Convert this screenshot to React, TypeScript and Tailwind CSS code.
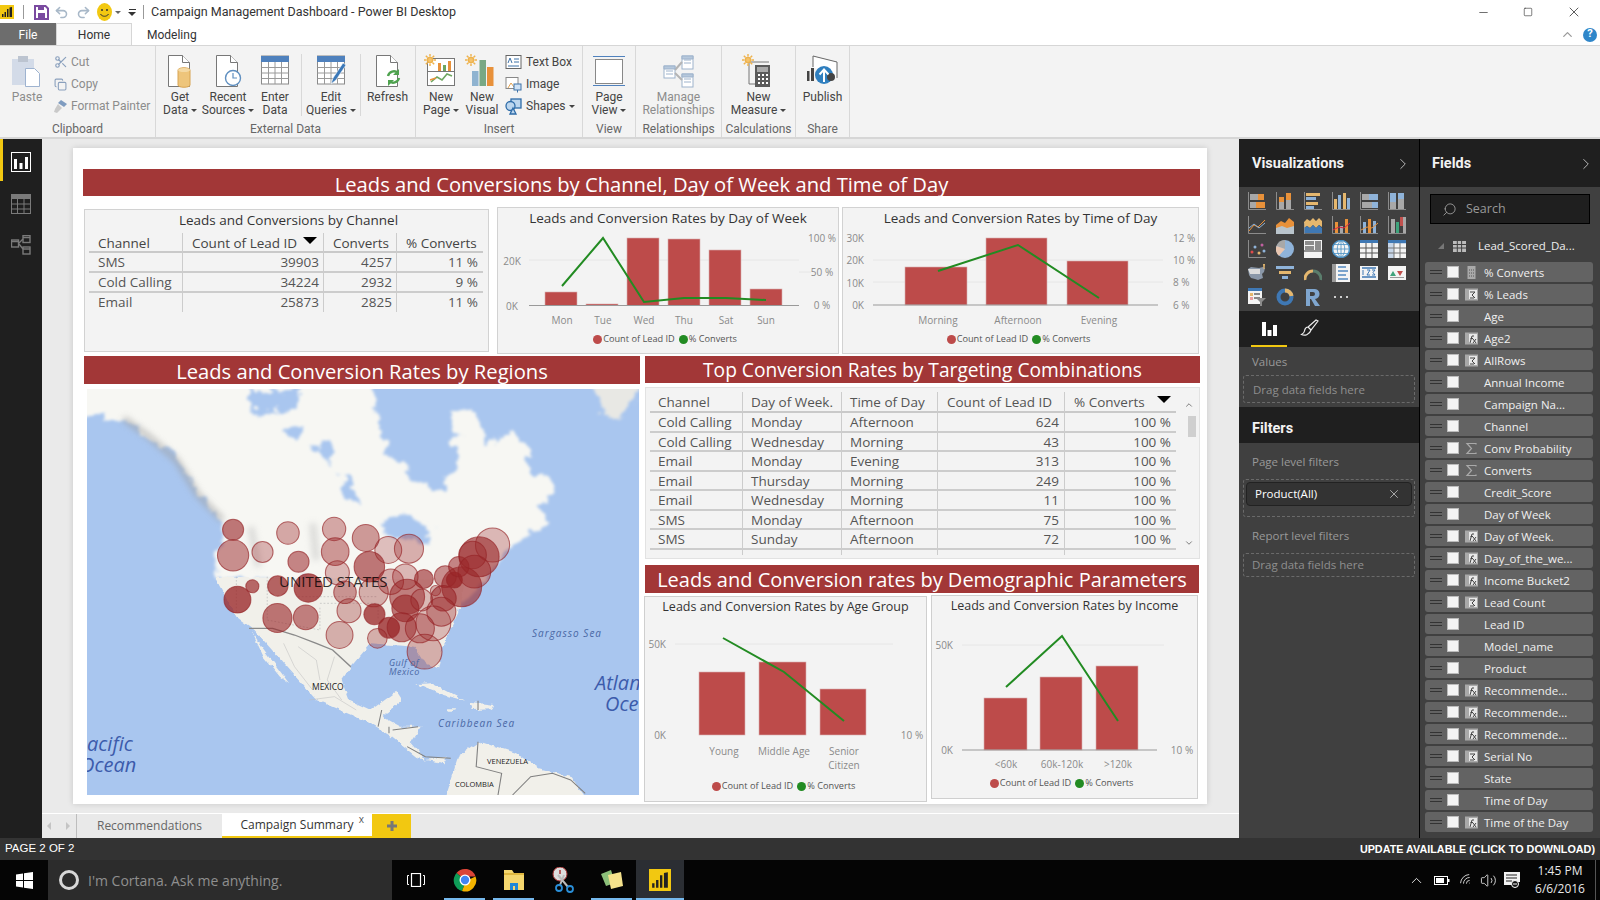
import { ReactNode } from "react";
import { ChevronRight, ChevronUp, Copy, Minus, Redo2, Scissors, Search, Square, Undo2, Volume2, Wifi, X } from "lucide-react";

const BAR = "#bd4b4a";
const LINE = "#228b22";
const YELLOW = "#f2c811";

const Caret = ({ color = "#444" }: { color?: string }) => (
  <span
    className="ml-[3px] inline-block h-0 w-0 border-x-[3px] border-t-[3px] border-x-transparent align-middle"
    style={{ borderTopColor: color }}
  />
);

/* ---------- ribbon icons ---------- */
const Doc = ({ children }: { children?: ReactNode }) => (
  <svg width="34" height="34" viewBox="0 0 34 34">
    <path d="M5.5 1.5h14l7 7v24h-21z" fill="#fff" stroke="#777" />
    <path d="M19.5 1.5v7h7" fill="#fff" stroke="#777" />
    {children}
  </svg>
);
const Sun = () => (
  <g stroke="#eeb24c" strokeWidth="1.4">
    <circle cx="6" cy="6" r="2.6" fill="#f5c36c" />
    <path d="M6 0v2.5M6 9.5V12M0 6h2.5M9.5 6H12M1.8 1.8l1.8 1.8M8.4 8.4l1.8 1.8M1.8 10.2l1.8-1.8M8.4 3.6l1.8-1.8" />
  </g>
);
const GridSheet = ({ pencil }: { pencil?: boolean }) => (
  <svg width="34" height="34" viewBox="0 0 34 34">
    <rect x="3.5" y="2" width="27" height="28" fill="#fff" stroke="#8a8a8a" />
    <rect x="3" y="2" width="28" height="6" fill="#4f81bd" />
    <path d="M3.5 13.5h27M3.5 19h27M3.5 24.5h27M10.5 8v22M17 8v22M23.5 8v22" stroke="#9a9a9a" fill="none" />
    {pencil && <path d="M17 30l2-6L29 9l3 2-10 15z" fill="#3b78b8" stroke="#fff" strokeWidth="0.6" />}
  </svg>
);
const PasteIcon = () => (
  <svg width="34" height="34" viewBox="0 0 34 34">
    <rect x="2" y="5" width="22" height="26" fill="#d3dbe8" />
    <rect x="8" y="2" width="10" height="6" fill="#bcc4d0" />
    <path d="M15.5 14.5h9l5 5v13h-14z" fill="#fff" stroke="#9eb3d0" />
  </svg>
);
const ManageIcon = () => (
  <svg width="34" height="34" viewBox="0 0 34 34" stroke="#9eb3cc" fill="#fff">
    <rect x="20" y="2" width="11" height="13" />
    <rect x="2" y="12" width="11" height="12" />
    <rect x="20" y="20" width="11" height="13" />
    <path d="M20 8l-7 8M13 19l7 7" fill="none" stroke="#b4b4b4" strokeWidth="2" />
    <path d="M4 17h7M4 20h7M22 6h7M22 9h7M22 25h7M22 28h7" strokeWidth="1" />
    <path d="M20 2h11v3H20zM2 12h11v3H2zM20 20h11v3H20z" fill="#b6c8dc" />
  </svg>
);

const RibbonBtn = ({ w, icon, label, label2, caret, dim }: { w: number; icon: ReactNode; label: string; label2?: string; caret?: boolean; dim?: boolean }) => (
  <div className="flex shrink-0 flex-col items-center" style={{ width: w }}>
    <div className="flex h-[37px] items-start justify-center">{icon}</div>
    <div className={`text-center text-[12px] leading-[13px] ${dim ? "text-[#8c8c8c]" : "text-[#444]"}`}>
      <div className="whitespace-nowrap">{label}{caret && !label2 && <Caret />}</div>
      {label2 && <div className="whitespace-nowrap">{label2}{caret && <Caret />}</div>}
    </div>
  </div>
);

const SmallBtn = ({ icon, label, dim, caret, gap = 5 }: { icon: ReactNode; label: string; dim?: boolean; caret?: boolean; gap?: number }) => (
  <div className={`flex h-[22px] items-center whitespace-nowrap text-[12px] ${dim ? "text-[#8c8c8c]" : "text-[#444]"}`}>
    <span className="flex w-[17px] justify-center" style={{ marginRight: gap }}>{icon}</span>
    {label}
    {caret && <Caret />}
  </div>
);

const RibbonGroup = ({ w, label, children }: { w: number; label: string; children: ReactNode }) => (
  <div className="flex h-full shrink-0 flex-col border-r border-[#d8d8d8]" style={{ width: w }}>
    <div className="flex h-[76px] pt-[8px]">{children}</div>
    <div className="text-center text-[12px] leading-[14px] text-[#666]">{label}</div>
  </div>
);

const Ribbon = () => (
  <div className="flex h-[93px] border-b-2 border-[#d6d6d6] bg-[#f3f3f3] font-['Roboto',sans-serif]">
    <RibbonGroup w={156} label="Clipboard">
      <div className="ml-[2px]"><RibbonBtn w={50} icon={<PasteIcon />} label="Paste" dim /></div>
      <div className="-mt-[3px]">
        <SmallBtn dim label="Cut" icon={<Scissors size={14} color="#8aa0bd" />} gap={2} />
        <SmallBtn dim label="Copy" icon={<Copy size={13} color="#8aa0bd" />} gap={2} />
        <SmallBtn dim label="Format Painter" gap={2} icon={
          <svg width="15" height="15" viewBox="0 0 15 15"><path d="M8 1l6 4-3 3-6-4z" fill="#7f9cc0" /><path d="M5 5l4 4-5 5-3-1 1-3z" fill="#c9c9c9" /></svg>
        } />
      </div>
    </RibbonGroup>
    <RibbonGroup w={260} label="External Data">
      <RibbonBtn w={48} label="Get" label2="Data" caret icon={<Doc><path d="M15 16c0-3 12-3 12 0v15c0 3-12 3-12 0z" fill="#eec57b" stroke="#d8a452" /><ellipse cx="21" cy="16" rx="6" ry="2" fill="#f4d9a4" /></Doc>} />
      <RibbonBtn w={48} label="Recent" label2="Sources" caret icon={<Doc><circle cx="22" cy="24" r="7.5" fill="#fff" stroke="#5f8fc0" strokeWidth="1.4" /><path d="M22 19v5h4" fill="none" stroke="#5f8fc0" strokeWidth="1.2" /></Doc>} />
      <RibbonBtn w={46} label="Enter" label2="Data" icon={<GridSheet />} />
      <div className="ml-[3px] h-[62px] w-px bg-[#d8d8d8]" />
      <RibbonBtn w={58} label="Edit" label2="Queries" caret icon={<GridSheet pencil />} />
      <div className="h-[62px] w-px bg-[#d8d8d8]" />
      <RibbonBtn w={53} label="Refresh" icon={<Doc><path d="M17 22a6 6 0 0 1 10-3M28 24a6 6 0 0 1-10 3" fill="none" stroke="#4ea24e" strokeWidth="2.4" /><path d="M28 15v6h-6zM17 32v-6h6z" fill="#4ea24e" /></Doc>} />
    </RibbonGroup>
    <RibbonGroup w={167} label="Insert">
      <RibbonBtn w={50} label="New" label2="Page" caret icon={
        <svg width="34" height="34" viewBox="0 0 34 34">
          <rect x="3.5" y="4.5" width="27" height="27" fill="#fff" stroke="#777" />
          <path d="M3.5 17.5h27" stroke="#777" />
          <rect x="14" y="9" width="3" height="8" fill="#e8913a" /><rect x="19" y="11" width="3" height="6" fill="#6ea660" /><rect x="24" y="7" width="3" height="10" fill="#e8913a" />
          <path d="M7 28l6-5 5 3 5-6 5 2" fill="none" stroke="#6ea660" strokeWidth="1.6" /><path d="M6 26l6-2" stroke="#e8913a" strokeWidth="1.6" />
          <Sun />
        </svg>} />
      <RibbonBtn w={32} label="New" label2="Visual" icon={
        <svg width="34" height="34" viewBox="0 0 34 34"><rect x="7" y="17" width="6.5" height="15" fill="#8fb3d0" /><rect x="14.5" y="6" width="6.5" height="26" fill="#79a884" /><rect x="22" y="13" width="6.5" height="19" fill="#e8913a" /><Sun /></svg>} />
      <div className="-mt-[3px] ml-[7px]">
        <SmallBtn label="Text Box" gap={4} icon={<svg width="17" height="16" viewBox="0 0 17 16"><rect x="1" y="1.5" width="15" height="13" fill="#fff" stroke="#666" /><path d="M3 9l2-5 2 5M9 5h5M9 8h5M3 12h11" stroke="#3f73a8" fill="none" /></svg>} />
        <SmallBtn label="Image" gap={4} icon={<svg width="17" height="17" viewBox="0 0 17 17"><rect x="1" y="1.5" width="12" height="11" fill="#fff" stroke="#888" /><path d="M3 12l3-5 3 4 2-2" stroke="#e0a050" fill="none" /><rect x="9" y="8" width="7" height="6" fill="#cfe2f5" stroke="#3f73a8" /><path d="M12.5 14v2.5" stroke="#3f73a8" /></svg>} />
        <SmallBtn label="Shapes" caret gap={4} icon={<svg width="17" height="17" viewBox="0 0 17 17" fill="#bcd6ee" stroke="#2f6ca8" strokeWidth="1.3"><rect x="6" y="1" width="10" height="9" /><circle cx="5.5" cy="8" r="4.5" /><path d="M5 16l3-6 3 6z" /></svg>} />
      </div>
    </RibbonGroup>
    <RibbonGroup w={53} label="View">
      <RibbonBtn w={52} label="Page" label2="View" caret icon={
        <svg width="34" height="34" viewBox="0 0 34 34"><rect x="3.5" y="5.5" width="27" height="24" fill="#fff" stroke="#888" /><path d="M1 2.5h32M1 31.5h32" stroke="#4f81bd" /></svg>} />
    </RibbonGroup>
    <RibbonGroup w={86} label="Relationships">
      <RibbonBtn w={85} label="Manage" label2="Relationships" dim icon={<ManageIcon />} />
    </RibbonGroup>
    <RibbonGroup w={74} label="Calculations">
      <RibbonBtn w={73} label="New" label2="Measure" caret icon={
        <svg width="34" height="34" viewBox="0 0 34 34">
          <path d="M7 8v22h7" fill="none" stroke="#777" /><path d="M7 8h20" stroke="#777" />
          <rect x="13" y="11" width="15" height="22" fill="#5a5a5a" /><rect x="15" y="13" width="11" height="5" fill="#a9a9a9" />
          <path d="M16 21h2M20 21h2M24 21h2M16 25h2M20 25h2M24 25h2M16 29h2M20 29h2M24 29h2" stroke="#fff" strokeWidth="1.8" />
          <Sun />
        </svg>} />
    </RibbonGroup>
    <RibbonGroup w={54} label="Share">
      <RibbonBtn w={53} label="Publish" icon={
        <svg width="34" height="34" viewBox="0 0 34 34">
          <path d="M7 13V2l24 6v16" fill="#fff" stroke="#666" />
          <rect x="1" y="17" width="2.5" height="10" fill="#444" /><rect x="5" y="14" width="3" height="13" fill="#444" />
          <circle cx="18" cy="21" r="9" fill="#2f7fbf" /><circle cx="25" cy="23" r="4" fill="#444" />
          <path d="M18 28v-12M13.5 20.5l4.5-5 4.5 5" fill="none" stroke="#fff" strokeWidth="2" />
        </svg>} />
    </RibbonGroup>
  </div>
);

/* ---------- title bar ---------- */
const PbiLogo = ({ size = 14 }: { size?: number }) => (
  <svg width={size} height={size} viewBox="0 0 14 14">
    <rect width="14" height="14" fill={YELLOW} />
    <path d="M2 12V9h1.5v3zM4.5 12V7H6v5zM7 12V4h1.5v8zM9.5 12V2.5L12 2v10z" fill="#222" />
  </svg>
);

const TitleBar = () => (
  <div className="flex h-[23px] items-center bg-white pt-[1px]">
    <PbiLogo />
    <div className="ml-[9px] h-[14px] w-px bg-[#999]" />
    <svg className="ml-[10px]" width="15" height="15" viewBox="0 0 15 15"><path d="M1 1h10.5L14 3.5V14H1z" fill="none" stroke="#7a4aa0" strokeWidth="2" /><rect x="4" y="1" width="6" height="4" fill="#7a4aa0" /><rect x="4" y="8" width="7" height="5" fill="#7a4aa0" /></svg>
    <Undo2 className="ml-[5px]" size={15} color="#a8b8c8" strokeWidth={2.5} />
    <Redo2 className="ml-[7px]" size={15} color="#a8b8c8" strokeWidth={2.5} />
    <svg className="ml-[6px]" width="15" height="18" viewBox="0 0 15 18"><ellipse cx="7.5" cy="9" rx="7.5" ry="9" fill={YELLOW} /><circle cx="5" cy="7" r="1" fill="#333" /><circle cx="10" cy="7" r="1" fill="#333" /><path d="M3.5 11c1.5 3 6.5 3 8 0" fill="none" stroke="#333" /></svg>
    <Caret color="#666" />
    <span className="ml-[7px] flex flex-col items-center gap-[2px]"><span className="h-px w-[7px] bg-[#333]" /><span className="h-0 w-0 border-x-[4px] border-t-[4px] border-x-transparent border-t-[#333]" /></span>
    <div className="ml-[7px] h-[14px] w-px bg-[#999]" />
    <span className="ml-[7px] font-['Roboto',sans-serif] text-[12.5px] text-[#333]">Campaign Management Dashboard - Power BI Desktop</span>
    <div className="ml-auto flex items-center text-[#333]">
      <Minus size={13} strokeWidth={1.3} />
      <Square className="ml-[33px]" size={10} strokeWidth={1.5} />
      <X className="ml-[33px] mr-[18px]" size={16} strokeWidth={1.2} />
    </div>
  </div>
);

const TabRow = () => (
  <div className="flex h-[23px] items-stretch border-b border-[#d6d6d6] bg-white pt-px font-['Roboto',sans-serif] text-[12px]">
    <div className="-mt-px flex w-[56px] items-center justify-center bg-[#6d6d6d] pt-px text-white">File</div>
    <div className="-mt-px flex w-[76px] items-center justify-center border-x border-t border-[#d6d6d6] bg-[#f8f8f8] pt-px text-[#333]">Home</div>
    <div className="flex items-center pl-[15px] text-[#333]">Modeling</div>
    <div className="ml-auto flex items-center">
      <ChevronUp size={15} color="#999" />
      <span className="ml-[8px] mr-[3px] flex h-[14px] w-[14px] items-center justify-center rounded-full bg-[#2f86c9] text-[11px] font-bold text-white">?</span>
    </div>
  </div>
);

/* ---------- report visuals ---------- */
const Banner = ({ text, size, className }: { text: string; size: number; className: string }) => (
  <div className={`flex items-center justify-center whitespace-nowrap bg-[#a23737] text-white ${className}`} style={{ fontSize: size }}>{text}</div>
);

const Legend = ({ className }: { className: string }) => (
  <div className={`flex items-center justify-center whitespace-nowrap text-[9.2px] text-[#555] ${className}`}>
    <span className="mr-px h-[9px] w-[9px] rounded-full" style={{ background: BAR }} />Count of Lead ID
    <span className="ml-[4px] mr-px h-[9px] w-[9px] rounded-full" style={{ background: LINE }} />% Converts
  </div>
);

type Label = [string, number, number, ("start" | "middle" | "end")?];
type ChartProps = {
  view: [number, number, number, number];
  bars: [number, number, number][];
  base: number;
  line: [number, number][];
  grid: [number, number, number][];
  axis?: [number, number, number];
  labels: Label[];
};

const Chart = ({ view, bars, base, line, grid, axis, labels }: ChartProps) => (
  <svg className="block shrink-0" width={view[2]} height={view[3]} viewBox={view.join(" ")}>
    {grid.map(([x1, x2, y]) => <path key={y} d={`M${x1} ${y}H${x2}`} stroke="#e6e6e6" />)}
    {bars.map(([x1, x2, top]) => <rect key={x1} x={x1} y={top} width={x2 - x1} height={base - top} fill={BAR} stroke="#d9b1b1" strokeWidth="0.6" />)}
    {axis && <path d={`M${axis[0]} ${axis[2]}H${axis[1]}`} stroke="#999" />}
    <polyline points={line.map(p => p.join(",")).join(" ")} fill="none" stroke={LINE} strokeWidth="2" />
    {labels.map(([t, x, y, anchor]) => (
      <text key={t + x + y} x={x} y={y + 3.5} textAnchor={anchor ?? "middle"} fontSize="10" fill="#8a8a8a">{t}</text>
    ))}
  </svg>
);

const ChannelTable = () => {
  const cols = "grid grid-cols-[94px_141px_73px_86px]";
  const rows = [["SMS", "39903", "4257", "11 %"], ["Cold Calling", "34224", "2932", "9 %"], ["Email", "25873", "2825", "11 %"]];
  return (
    <div className="mt-[2px] h-[143px] w-[405px] shrink-0 border border-[#d2d2d2] bg-[#f3f3f3] pl-[4px] text-[13.5px] text-[#555]">
      <div className="h-[23px] text-center leading-[20px] text-[#333]">Leads and Conversions by Channel</div>
      <div className={`${cols} h-[20px] w-[394px] border-b-2 border-[#c9c9c9] text-[#444]`}>
        <div className="border-r border-[#ccc] pl-[9px]">Channel</div>
        <div className="relative border-r border-[#ccc] pl-[9px]">Count of Lead ID<span className="absolute left-[120px] top-[4px] h-0 w-0 border-x-[7px] border-t-[7px] border-x-transparent border-t-black" /></div>
        <div className="border-r border-[#ccc] pl-[9px]">Converts</div>
        <div className="pl-[9px]">% Converts</div>
      </div>
      {rows.map((r, i) => (
        <div key={r[0]} className={`${cols} w-[394px] ${i === 2 ? "h-[18px]" : "h-[20px] border-b-2 border-[#ccc]"}`}>
          <div className="border-r border-[#ccc] pl-[9px] leading-[19px]">{r[0]}</div>
          <div className="border-r border-[#ccc] pr-[4px] text-right leading-[19px]">{r[1]}</div>
          <div className="border-r border-[#ccc] pr-[4px] text-right leading-[19px]">{r[2]}</div>
          <div className="pr-[5px] text-right leading-[19px]">{r[3]}</div>
        </div>
      ))}
    </div>
  );
};

const ComboTable = () => {
  const cols = "grid grid-cols-[93px_99px_96px_127px_111px]";
  const rows = [
    ["Cold Calling", "Monday", "Afternoon", "624"],
    ["Cold Calling", "Wednesday", "Morning", "43"],
    ["Email", "Monday", "Evening", "313"],
    ["Email", "Thursday", "Morning", "249"],
    ["Email", "Wednesday", "Morning", "11"],
    ["SMS", "Monday", "Afternoon", "75"],
    ["SMS", "Sunday", "Afternoon", "72"],
  ];
  return (
    <div className="relative mt-[4px] h-[172px] w-[555px] border border-[#e2e2e2] bg-[#f3f3f3] pl-[4px] pt-[4px] text-[13.5px] text-[#555]">
      <div className={`${cols} h-[21px] w-[526px] border-b-2 border-[#c9c9c9] leading-[20px]`}>
        <div className="border-r border-[#ccc] pl-[8px]">Channel</div>
        <div className="border-r border-[#ccc] pl-[8px]">Day of Week.</div>
        <div className="border-r border-[#ccc] pl-[8px]">Time of Day</div>
        <div className="border-r border-[#ccc] pl-[9px]">Count of Lead ID</div>
        <div className="relative pl-[9px]">% Converts<span className="absolute left-[92px] top-[4px] h-0 w-0 border-x-[7px] border-t-[7px] border-x-transparent border-t-black" /></div>
      </div>
      {rows.map(r => (
        <div key={r[0] + r[1]} className={`${cols} h-[19.5px] w-[526px] border-b-2 border-[#ccc] leading-[19px]`}>
          <div className="border-r border-[#ccc] pl-[8px]">{r[0]}</div>
          <div className="border-r border-[#ccc] pl-[8px]">{r[1]}</div>
          <div className="border-r border-[#ccc] pl-[8px]">{r[2]}</div>
          <div className="border-r border-[#ccc] pr-[5px] text-right">{r[3]}</div>
          <div className="pr-[5px] text-right">100 %</div>
        </div>
      ))}
      <div className={`${cols} h-[5px] w-[526px]`}>
        <div className="border-r border-[#ccc]" /><div className="border-r border-[#ccc]" /><div className="border-r border-[#ccc]" /><div className="border-r border-[#ccc]" />
      </div>
      <ChevronUp className="absolute left-[538px] top-[12px]" size={10} color="#666" />
      <div className="absolute left-[542px] top-[28px] h-[21px] w-[8px] bg-[#cfcfcf]" />
      <ChevronUp className="absolute left-[538px] top-[150px] rotate-180" size={10} color="#666" />
    </div>
  );
};

/* ---------- map ---------- */
const CIRCLES: [number, number, number, number][] = [
  [421, 449, 29, 0.62], [572, 459, 31, 0.38], [699, 447, 32, 0.38], [786, 474, 37, 0.45], [421, 526, 43, 0.5],
  [502, 516, 29, 0.32], [601, 545, 29, 0.55], [702, 515, 38, 0.46], [848, 510, 37, 0.27], [905, 506, 40, 0.35],
  [796, 560, 42, 0.62], [708, 578, 33, 0.3], [474, 619, 18, 0.68], [544, 618, 28, 0.7], [628, 624, 39, 0.76],
  [433, 659, 37, 0.78], [729, 637, 31, 0.46], [808, 637, 40, 0.33], [855, 605, 35, 0.35], [895, 590, 35, 0.3],
  [946, 597, 26, 0.62], [1005, 590, 30, 0.5], [1030, 600, 22, 0.82], [1050, 620, 55, 0.62], [1042, 560, 28, 0.55],
  [1135, 495, 47, 0.3], [1098, 530, 55, 0.62], [1080, 525, 38, 0.45], [1085, 575, 45, 0.45], [900, 650, 48, 0.56],
  [940, 660, 30, 0.27], [978, 632, 14, 0.33], [1000, 655, 35, 0.56], [895, 685, 37, 0.62], [994, 695, 40, 0.38],
  [972, 730, 48, 0.27], [740, 692, 33, 0.33], [810, 703, 29, 0.76], [850, 743, 29, 0.78], [885, 742, 40, 0.56],
  [935, 745, 40, 0.38], [543, 714, 40, 0.62], [621, 712, 34, 0.56], [714, 765, 37, 0.33], [818, 775, 27, 0.33],
  [948, 815, 48, 0.33],
];

const MapLabel = ({ x, y, className, children }: { x: number; y: number; className: string; children: ReactNode }) => (
  <span className={`absolute -translate-y-1/2 whitespace-nowrap ${className}`} style={{ left: x, top: y }}>{children}</span>
);

const RegionMap = () => (
  <div className="relative ml-[3px] mt-[5px] h-[406px] w-[552px] overflow-hidden bg-[#a9c6ef]">
    <svg className="block" width="552" height="406" viewBox="19 27 1519 1218" preserveAspectRatio="none">
      <defs>
        <filter id="coast" x="-10%" y="-10%" width="120%" height="120%">
          <feTurbulence type="fractalNoise" baseFrequency="0.022" numOctaves="4" seed="7" result="n" />
          <feDisplacementMap in="SourceGraphic" in2="n" scale="70" xChannelSelector="R" yChannelSelector="G" />
          <feGaussianBlur stdDeviation="4" />
        </filter>
        <filter id="shore" x="-5%" y="-5%" width="110%" height="110%">
          <feTurbulence type="fractalNoise" baseFrequency="0.05" numOctaves="3" seed="3" result="n" />
          <feDisplacementMap in="SourceGraphic" in2="n" scale="14" xChannelSelector="R" yChannelSelector="G" />
        </filter>
        <filter id="soft2" x="-20%" y="-20%" width="140%" height="140%"><feGaussianBlur stdDeviation="9" /></filter>
      </defs>
      <g filter="url(#coast)" fill="#f7f7f3">
        <path d="M-60-60H790L815 90 830 170 855 235 950 310 1000 335 1060 640 600 600 375 600 385 420 320 340 260 230 180 160 110 110-60 85Z" />
        <path d="M1000 335L1040 240 1025 110 1060 80 1100 110 1125 180 1195 170 1240 240 1300 330 1265 385 1305 425 1210 475 1170 530 1100 610 1050 680 950 600Z" />
        <path d="M1400-60H1600L1490 105 1440 90Z" fill="#e8e8e4" />
      </g>
      <g filter="url(#coast)" fill="#a9c6ef">
        <path d="M470 40L610 30 590 85 490 100Z" />
        <path d="M555 150L620 140 600 175 565 185Z" />
        <path d="M650 190L690 180 700 250 660 220Z" />
        <path d="M715 290L760 330 770 385 730 350Z" />
        <path d="M820 430L900 395 960 440 950 490 850 470Z" />
      </g>
      <path d="M120 115L190 170 265 240 325 345 392 420" fill="none" stroke="#9c9c9c" strokeWidth="16" opacity="0.6" filter="url(#soft2)" />
      <path d="M470 440L490 560M640 430L650 540" fill="none" stroke="#bbb" strokeWidth="18" opacity="0.5" filter="url(#soft2)" />
      <g fill="#f1f0ea" filter="url(#shore)">
        <path d="M370 590L1060 600 1040 700 1000 790 985 865 950 850 920 800 800 790 745 860 720 900 740 960 800 990 870 935 885 960 830 1010 880 1040 940 1040 910 1090 950 1140 1010 1130 1000 1150 930 1135 850 1065 790 1025 650 960 560 850 480 750 430 710Z" />
        <path d="M470 750L500 800 575 910 550 890 505 830Z" />
        <path d="M925 912L970 910 1030 945 1060 962 1000 945 950 925Z" />
        <path d="M1070 965L1140 975 1135 988 1080 990Z" />
        <path d="M1010 985L1035 985 1030 992 1012 992Z" />
        <path d="M1000 1265L1040 1130 1100 1085 1200 1120 1260 1165 1350 1190 1400 1265Z" />
      </g>
      <path d="M465 745L530 745 590 765 650 790 695 810 745 860" fill="none" stroke="#8a8a8a" strokeWidth="4" />
      <path d="M560 790L590 860 640 930M600 800L650 840 660 900M700 830L680 900 720 960M630 960L700 950 760 990" fill="none" stroke="#bdbdbd" strokeWidth="1.5" />
      <path d="M830 990L820 1040M860 1050L930 1040M850 1040L850 1060M900 1100L950 1130 1020 1135M1095 1085L1090 1160 1160 1180 1150 1245M1190 1245L1240 1190 1300 1180 1350 1200 1390 1240M1095 962V990" fill="none" stroke="#808080" strokeWidth="3" />
      <path d="M430 590V700M515 590V720L660 750V680M660 670H820V720M600 650H820" fill="none" stroke="#bbb" strokeWidth="2" strokeDasharray="5 5" />
      {CIRCLES.map(([x, y, r, o]) => (
        <ellipse key={`${x}-${y}`} cx={x} cy={y} rx={r} ry={r * 1.09} fill="#9a2628" fillOpacity={o} stroke="#952426" strokeOpacity="0.65" strokeWidth="3" />
      ))}
    </svg>
    <MapLabel x={192} y={192} className="text-[15px] text-black/80">UNITED STATES</MapLabel>
    <MapLabel x={445} y={244} className="text-[10px] italic tracking-[1px] text-[#4a68a5]">Sargasso Sea</MapLabel>
    <MapLabel x={302} y={274} className="text-[9px] italic tracking-[0.5px] text-[#4a68a5]">Gulf of</MapLabel>
    <MapLabel x={302} y={283} className="text-[9px] italic tracking-[0.5px] text-[#4a68a5]">Mexico</MapLabel>
    <MapLabel x={225} y={298} className="text-[8.5px] text-[#222]">MEXICO</MapLabel>
    <MapLabel x={508} y={294} className="text-[20px] italic text-[#3c5bab]">Atlantic</MapLabel>
    <MapLabel x={518} y={315} className="text-[20px] italic text-[#3c5bab]">Ocean</MapLabel>
    <MapLabel x={351} y={334} className="text-[10px] italic tracking-[1px] text-[#4a68a5]">Caribbean Sea</MapLabel>
    <MapLabel x={0} y={355} className="text-[20px] italic text-[#3c5bab]">acific</MapLabel>
    <MapLabel x={-7} y={376} className="text-[20px] italic text-[#3c5bab]">Ocean</MapLabel>
    <MapLabel x={400} y={373} className="text-[7.5px] text-[#222]">VENEZUELA</MapLabel>
    <MapLabel x={368} y={396} className="text-[7.5px] text-[#222]">COLOMBIA</MapLabel>
  </div>
);

const ReportPage = () => (
  <div className="ml-[31px] mt-[9px] h-[656px] w-[1134px] shrink-0 bg-white pl-[10px] pt-[21px] shadow-[0_0_6px_rgba(0,0,0,0.15)]">
    <Banner text="Leads and Conversions by Channel, Day of Week and Time of Day" size={20.2} className="h-[27px] w-[1117px] pt-[3px]" />
    <div className="ml-px mt-[11px] flex h-[147px]">
      <ChannelTable />
      <div className="ml-[8px] h-[147px] w-[342px] shrink-0 border border-[#d2d2d2] bg-[#f3f3f3]">
        <div className="h-[22px] text-center text-[13.5px] leading-[20px] text-[#333]">Leads and Conversion Rates by Day of Week</div>
        <Chart
          view={[497, 230, 340, 101]}
          base={305.5}
          bars={[[544, 576, 292], [585, 617, 304], [626, 658, 238], [667, 699, 239], [708, 740, 250], [749, 781, 289]]}
          line={[[561, 286], [602, 238], [643, 302], [683, 298], [725, 298], [765, 300]]}
          grid={[[528, 798, 260], [798, 810, 272]]}
          axis={[528, 798, 305.5]}
          labels={[["20K", 511, 261], ["0K", 511, 306], ["100 %", 821, 238], ["50 %", 821, 272], ["0 %", 821, 305],
            ["Mon", 561, 320], ["Tue", 602, 320], ["Wed", 643, 320], ["Thu", 683, 320], ["Sat", 725, 320], ["Sun", 765, 320]]}
        />
        <Legend className="h-[16px] pr-[6px]" />
      </div>
      <div className="ml-[3px] h-[147px] w-[357px] shrink-0 border border-[#d2d2d2] bg-[#f3f3f3]">
        <div className="h-[22px] text-center text-[13.5px] leading-[20px] text-[#333]">Leads and Conversion Rates by Time of Day</div>
        <Chart
          view={[843, 230, 355, 101]}
          base={305}
          bars={[[905, 967, 267], [986, 1047, 238], [1067, 1128, 261]]}
          line={[[938, 271], [1018, 245], [1099, 298]]}
          grid={[[873, 1163, 260], [873, 1163, 282]]}
          axis={[873, 1158, 305]}
          labels={[["30K", 864, 238, "end"], ["20K", 864, 260, "end"], ["10K", 864, 283, "end"], ["0K", 864, 305, "end"],
            ["12 %", 1173, 238, "start"], ["10 %", 1173, 260, "start"], ["8 %", 1173, 282, "start"], ["6 %", 1173, 305, "start"],
            ["Morning", 938, 320], ["Afternoon", 1018, 320], ["Evening", 1099, 320]]}
        />
        <Legend className="h-[16px] pr-[4px]" />
      </div>
    </div>
    <div className="ml-px mt-[2px] flex">
      <div className="w-[556px] shrink-0">
        <Banner text="Leads and Conversion Rates by Regions" size={20.2} className="h-[28px] w-[556px] pt-[3px]" />
        <RegionMap />
      </div>
      <div className="ml-[5px] w-[555px] shrink-0">
        <Banner text="Top Conversion Rates by Targeting Combinations" size={19.2} className="h-[27px] w-[555px] pt-[2px]" />
        <ComboTable />
        <Banner text="Leads and Conversion rates by Demographic Parameters" size={20} className="mt-[6px] h-[28px] w-[554px] pt-[2px]" />
        <div className="-ml-px mt-[2px] flex items-start">
          <div className="mt-px h-[206px] w-[283px] shrink-0 border border-[#cfcfcf] bg-[#f3f3f3]">
            <div className="h-[22px] text-center text-[12.5px] leading-[19px] text-[#333]">Leads and Conversion Rates by Age Group</div>
            <Chart
              view={[645, 619, 281, 158]}
              base={735}
              bars={[[699, 745, 672], [759, 806, 662], [820, 866, 689]]}
              line={[[723, 638], [784, 672], [844, 721]]}
              grid={[[675, 893, 644]]}
              labels={[["50K", 666, 644, "end"], ["0K", 666, 735, "end"], ["10 %", 912, 735],
                ["Young", 724, 751], ["Middle Age", 784, 751], ["Senior", 844, 751], ["Citizen", 844, 765]]}
            />
            <Legend className="h-[18px] pr-[4px]" />
          </div>
          <div className="ml-[4px] h-[204px] w-[267px] shrink-0 border border-[#cfcfcf] bg-[#f3f3f3]">
            <div className="h-[20px] text-center text-[12.5px] leading-[20px] text-[#333]">Leads and Conversion Rates by Income</div>
            <Chart
              view={[932, 616, 265, 158]}
              base={750}
              bars={[[984, 1027, 698], [1040, 1082, 677], [1096, 1138, 666]]}
              line={[[1006, 687], [1062, 636], [1118, 721]]}
              grid={[[962, 1164, 645]]}
              axis={[962, 1157, 750]}
              labels={[["50K", 953, 645, "end"], ["0K", 953, 750, "end"], ["10 %", 1182, 750],
                ["<60k", 1006, 764], ["60k-120k", 1062, 764], [">120k", 1118, 764]]}
            />
            <Legend className="h-[18px] pr-[6px]" />
          </div>
        </div>
      </div>
    </div>
  </div>
);

const PageTabs = () => (
  <div className="mt-auto flex h-[25px] border-t border-white bg-[#e9e9e9] pl-[4px] text-[12px]">
    <div className="flex w-[31px] items-center justify-between border-r border-[#bdbdbd] pr-[6px] pl-[1px]">
      <span className="h-0 w-0 border-y-[4px] border-r-[4px] border-y-transparent border-r-[#c4c4c4]" />
      <span className="h-0 w-0 border-y-[4px] border-l-[4px] border-y-transparent border-l-[#c4c4c4]" />
    </div>
    <div className="flex w-[145px] items-center justify-center text-[#666]">Recommendations</div>
    <div className="relative flex w-[150px] items-center justify-center border-b-2 border-[#f2c811] bg-white text-[#333]">
      Campaign Summary
      <span className="absolute right-[8px] top-[-2px] text-[10px] leading-[14px] text-[#555]">x</span>
    </div>
    <div className="flex w-[39px] items-center justify-center bg-[#f2c811]">
      <svg width="12" height="12" viewBox="0 0 12 12"><path d="M6 1v10M1 6h10" stroke="#777" strokeWidth="3" /></svg>
    </div>
  </div>
);

/* ---------- left rail ---------- */
const LeftRail = () => (
  <div className="relative flex w-[42px] shrink-0 flex-col items-center bg-[#1f1f1f] pt-[13px]">
    <div className="absolute left-0 top-0 h-[42px] w-[3px] bg-[#f2c811]" />
    <svg width="20" height="20" viewBox="0 0 20 20"><rect x="0.5" y="0.5" width="19" height="19" fill="none" stroke="#fff" /><path d="M3 17V7h3v10zM8.5 17v-6h3v6zM14 17V5h3v12z" fill="#fff" /></svg>
    <svg className="mt-[22px]" width="20" height="20" viewBox="0 0 20 20"><rect x="0.5" y="0.5" width="19" height="19" fill="none" stroke="#7a7a7a" /><rect width="20" height="5" fill="#7a7a7a" /><path d="M0 10h20M0 15h20M6.5 5v15M13 5v15" stroke="#7a7a7a" /></svg>
    <svg className="mt-[21px]" width="20" height="20" viewBox="0 0 20 20" fill="none" stroke="#7a7a7a" strokeWidth="1.4"><rect x="0.5" y="5" width="7" height="7" /><rect x="12" y="0.5" width="7" height="7" /><rect x="12" y="12" width="7" height="7" /><path d="M8 8l4-4M8 9l4 5M0 6.5h7M12 2.5h7M12 14h7" /></svg>
  </div>
);

/* ---------- visualizations gallery ---------- */
const G = "#a8a8a8", O = "#e8913a", B = "#8fb3d9", T = "#e5b76e", W = "#f4f4f4";
const Ax = () => <path d="M0.5 0v17.5H18" fill="none" stroke="#8c8c8c" />;
const R = ({ x, y, w, h, c }: { x: number; y: number; w: number; h: number; c: string }) => <rect x={x} y={y} width={w} height={h} fill={c} />;
const vizIcons: ReactNode[] = [
  <><Ax /><R x={2} y={2} w={8} h={6} c={G} /><R x={10} y={2} w={6} h={6} c={O} /><R x={2} y={10} w={6} h={6} c={G} /><R x={8} y={10} w={9} h={6} c={O} /></>,
  <><Ax /><R x={3} y={10} w={5} h={7} c={G} /><R x={3} y={5} w={5} h={5} c={O} /><R x={10} y={8} w={5} h={9} c={G} /><R x={10} y={1} w={5} h={7} c={O} /></>,
  <><Ax /><R x={2} y={1} w={14} h={3} c={T} /><R x={2} y={5} w={10} h={3} c={B} /><R x={2} y={10} w={12} h={3} c={T} /><R x={2} y={14} w={8} h={3} c={B} /></>,
  <><Ax /><R x={2} y={7} w={3} h={10} c={T} /><R x={6} y={3} w={3} h={14} c={B} /><R x={11} y={1} w={3} h={16} c={T} /><R x={15} y={6} w={3} h={11} c={B} /></>,
  <><Ax /><R x={2} y={2} w={7} h={6} c={G} /><R x={9} y={2} w={9} h={6} c={B} /><R x={2} y={10} w={10} h={6} c={G} /><R x={12} y={10} w={6} h={6} c={B} /></>,
  <><Ax /><R x={2} y={1} w={6} h={9} c={B} /><R x={2} y={10} w={6} h={7} c={G} /><R x={10} y={1} w={6} h={6} c={B} /><R x={10} y={7} w={6} h={10} c={G} /></>,
  <><Ax /><path d="M1 15l5-6 4 2 7-7" fill="none" stroke={O} /><path d="M1 12l5-4 5 4 6-5" fill="none" stroke={B} /></>,
  <><path d="M0 9l5-4 4 2 4-5 5 4v12H0z" fill={O} /><path d="M0 12l6-2 5 2 7-2v8H0z" fill="#b9c4cc" /></>,
  <><path d="M0 6l3-3 3 2 3-3 3 3 3-3 3 3v6l-3-2-3 3-3-3-3 3-3-2-3 2z" fill={T} /><path d="M0 12l3-2 3 2 3-3 3 3 3-3 3 3v5H0z" fill="#3f78b4" /><path d="M0 7v11h18" stroke="#999" fill="none" /></>,
  <><Ax /><R x={3} y={6} w={3} h={11} c={O} /><R x={8} y={10} w={3} h={7} c={G} /><R x={13} y={3} w={3} h={14} c={O} /><path d="M1 14l6-3 5 1 6-5" stroke="#d24" fill="none" /></>,
  <><Ax /><R x={3} y={6} w={3} h={11} c={B} /><R x={8} y={3} w={3} h={14} c={O} /><R x={13} y={5} w={3} h={12} c={B} /><path d="M1 14l6-3 5 1 6-5" stroke="#e8913a" fill="none" /></>,
  <><Ax /><R x={3} y={3} w={4} h={14} c={G} /><R x={8} y={6} w={3} h={11} c="#3fa37c" /><R x={12} y={1} w={3} h={9} c="#c0504d" /><R x={15} y={1} w={3} h={16} c={G} /></>,
  <><Ax /><circle cx="4" cy="12" r="1.5" fill="#e04a4a" /><circle cx="7" cy="7" r="1.5" fill={B} /><circle cx="11" cy="13" r="1.5" fill={T} /><circle cx="14" cy="5" r="1.5" fill="#c060a0" /><circle cx="16" cy="11" r="1.5" fill={B} /></>,
  <><circle cx="9" cy="9" r="9" fill={B} /><path d="M9 9L0.5 6A9 9 0 0 1 9 0z" fill={G} /><path d="M9 9L0.5 6A9 9 0 0 0 3 15.8z" fill="#e9c6b0" /></>,
  <><rect width="18" height="18" fill={W} /><R x={1} y={1} w={9} h={4} c="#8c8c8c" /><R x={11} y={1} w={6} h={9} c="#8c8c8c" /><R x={1} y={6} w={9} h={4} c="#8c8c8c" /><path d="M0 11h18" stroke="#333" /></>,
  <><circle cx="9" cy="9" r="8.5" fill={W} stroke="#4a8fc2" strokeWidth="1.5" /><path d="M0 9h18M9 0v18M2 4.5h14M2 13.5h14M9 .5c-5 4-5 13 0 17M9 .5c5 4 5 13 0 17" fill="none" stroke="#4a8fc2" strokeWidth="0.8" /></>,
  <><rect width="18" height="18" fill={W} /><R x={0} y={0} w={18} h={3} c="#3f78b4" /><path d="M6 3v15M12 3v15M0 8h18M0 13h18" stroke="#555" /></>,
  <><rect width="18" height="18" fill="#c7d6e8" /><R x={0} y={0} w={18} h={3} c="#3f78b4" /><R x={6} y={4} w={12} h={14} c={W} /><path d="M6 3v15M12 3v15M0 8h18M0 13h18" stroke="#777" /></>,
  <><path d="M0 5l3-2 8 1 4-1 2 1-1 4-2 2 1 4-5 2-3-1-4-1-2-3z" fill="#8a97a8" /><path d="M0 5h12v5H2z" fill="#dcdcdc" /><path d="M15 0h2l-.5 5h-1z" fill={T} /></>,
  <><R x={0} y={2} w={18} h={3} c={B} /><R x={3} y={7} w={12} h={3} c={T} /><R x={6} y={12} w={6} h={3} c={B} /></>,
  <><path d="M1 16a8 8 0 0 1 8-9" fill="none" stroke={T} strokeWidth="3" /><path d="M9 7a8 8 0 0 1 8 9" fill="none" stroke="#5a7d6c" strokeWidth="3" /></>,
  <><rect width="18" height="18" fill={W} /><R x={0} y={0} w={4} h={18} c="#9a9a9a" /><path d="M6 3h8M6 7h10M6 11h8M6 15h10" stroke="#7aa3cc" strokeWidth="2" /></>,
  <><rect width="18" height="14" y="2" fill={W} /><path d="M2 4h14M2 13h14" stroke="#3f78b4" strokeWidth="1.5" /><path d="M3 11V6M7 6h3l-3 5h3M12 6h3l-2 2.5 2 2.5h-3" fill="none" stroke="#3f78b4" /></>,
  <><rect width="18" height="14" y="2" fill={W} /><path d="M2 12l3-5 3 5z" fill="#3fa37c" /><path d="M9 7h6l-3 5z" fill="#c0504d" /><path d="M2 13.5h14" stroke="#999" /></>,
  <><rect width="14" height="16" fill={W} /><R x={0} y={0} w={14} h={3} c="#3f78b4" /><R x={2} y={5} w={3} h={3} c={T} /><R x={2} y={9} w={3} h={3} c="#e9a0a0" /><path d="M6 6h6M6 10h6" stroke="#888" strokeWidth="2" /><path d="M8 10h10l-4 4v4h-2v-4z" fill="#8c8c8c" /></>,
  <><circle cx="9" cy="9" r="6.5" fill="none" stroke="#3f78b4" strokeWidth="4" /><path d="M9 2.5A6.5 6.5 0 0 1 15.5 8" fill="none" stroke={T} strokeWidth="4" /></>,
  <><path d="M2 18V1h8a5 5 0 0 1 1 10l5 7h-5l-4-7H6v7zM6 4v4h3a2 2 0 0 0 0-4z" fill="#7fa6cf" /></>,
  <><circle cx="3" cy="9" r="1" fill="#fff" /><circle cx="9" cy="9" r="1" fill="#fff" /><circle cx="15" cy="9" r="1" fill="#fff" /></>,
];

const VizPanel = () => (
  <div className="flex w-[181px] shrink-0 flex-col border-r border-black bg-[#404040]">
    <div className="flex h-[48px] items-center justify-between bg-[#1f1f1f] pl-[13px] pr-[7px] pt-[2px] font-['Roboto',sans-serif] text-[14.5px] font-bold text-[#f2f2f2]">
      Visualizations<ChevronRight size={18} color="#bbb" strokeWidth={1.3} />
    </div>
    <div className="grid h-[124px] grid-cols-[repeat(6,28px)] grid-rows-[repeat(5,24px)] content-center justify-start pl-[4px]">
      {vizIcons.map((icon, i) => (
        <div key={i} className="flex items-center justify-center">
          <svg width="18" height="18" viewBox="0 0 18 18">{icon}</svg>
        </div>
      ))}
    </div>
    <div className="flex h-[36px] bg-[#1f1f1f] pl-[12px]">
      <div className="flex w-[36px] items-center justify-center border-b-2 border-[#f2c811]">
        <svg width="15" height="15" viewBox="0 0 15 15" fill="#fff"><path d="M0 1h4v14H0zM5.5 9h4v6h-4zM11 4h4v11h-4z" /></svg>
      </div>
      <svg className="ml-[13px] mt-[8px]" width="19" height="19" viewBox="0 0 19 19" fill="none" stroke="#eee" strokeWidth="1.2"><path d="M18 2l-2-1L8 8l3 3zM8 8c-3 0-3 2-3.5 4-.3 1.5-2 3-3 3.5 3 1.5 8 .5 9.5-4.5z" /></svg>
    </div>
    <div className="h-[60px] px-[4px] text-[11.5px]">
      <div className="pl-[9px] pt-[7px] leading-[16px] text-[#999]">Values</div>
      <div className="mt-[5px] flex h-[28px] items-center rounded-[3px] border border-dashed border-[#6a6a6a] pl-[9px] pt-[1px] text-[#8f8f8f]">Drag data fields here</div>
    </div>
    <div className="flex h-[36px] items-center bg-[#1f1f1f] pl-[13px] pt-[8px] font-['Roboto',sans-serif] text-[14.5px] font-bold text-[#f2f2f2]">Filters</div>
    <div className="px-[4px] text-[11.5px] text-[#999]">
      <div className="pl-[9px] pt-[11px] leading-[16px]">Page level filters</div>
      <div className="mt-[9px] h-[38px] rounded-[3px] border border-dashed border-[#6a6a6a] px-[2px] pt-[2px]">
        <div className="flex h-[24px] items-center justify-between rounded-[4px] border border-[#222] bg-[#333] pl-[8px] pr-[10px] text-white">Product(All)<X size={14} color="#ccc" strokeWidth={1.3} /></div>
      </div>
      <div className="pl-[9px] pt-[11px] leading-[16px]">Report level filters</div>
      <div className="mt-[9px] flex h-[24px] items-center rounded-[3px] border border-dashed border-[#6a6a6a] pl-[8px] text-[#8f8f8f]">Drag data fields here</div>
    </div>
  </div>
);

/* ---------- fields ---------- */
type FieldKind = "none" | "calc" | "sum" | "fx" | "tbl";
const FIELDS: [string, FieldKind][] = [
  ["% Converts", "calc"], ["% Leads", "tbl"], ["Age", "none"], ["Age2", "fx"], ["AllRows", "tbl"], ["Annual Income", "none"],
  ["Campaign Na...", "none"], ["Channel", "none"], ["Conv Probability", "sum"], ["Converts", "sum"], ["Credit_Score", "none"],
  ["Day of Week", "none"], ["Day of Week.", "fx"], ["Day_of_the_we...", "fx"], ["Income Bucket2", "fx"], ["Lead Count", "tbl"],
  ["Lead ID", "none"], ["Model_name", "none"], ["Product", "none"], ["Recommende...", "fx"], ["Recommende...", "fx"],
  ["Recommende...", "fx"], ["Serial No", "tbl"], ["State", "none"], ["Time of Day", "none"], ["Time of the Day", "fx"],
];

const FieldIcon = ({ kind }: { kind: FieldKind }) => {
  if (kind === "none") return null;
  if (kind === "calc") return <svg width="13" height="13" viewBox="0 0 13 13"><rect x="2.5" width="8" height="13" fill="#a9a9a9" /><path d="M4 4h1M6 4h1M8 4h1M4 7h1M6 7h1M8 7h1M4 10h1M6 10h1M8 10h1" stroke="#555" /></svg>;
  if (kind === "sum") return <svg width="13" height="13" viewBox="0 0 13 13"><path d="M11 2.5V1.500H2l4.500 5-4.500 5h9v-1" fill="none" stroke="#a9a9a9" strokeWidth="1.2" /></svg>;
  return (
    <svg width="13" height="13" viewBox="0 0 13 13">
      <rect width="13" height="12" y="0.5" fill="#a9a9a9" /><rect x="4" y="2" width="8" height="9" fill="#e8e8e8" />
      {kind === "fx"
        ? <path d="M5 11l2-7h2M5.5 6.5H8M8 7l3 4M11 7l-3 4" fill="none" stroke="#444" />
        : <path d="M5 4h5M10 4l-3 3 3 3M5 10h4" fill="none" stroke="#444" />}
    </svg>
  );
};

const FieldsPanel = () => (
  <div className="flex w-[180px] shrink-0 flex-col bg-[#404040]">
    <div className="flex h-[48px] shrink-0 items-center justify-between bg-[#1f1f1f] pl-[12px] pr-[5px] pt-[2px] font-['Roboto',sans-serif] text-[14.5px] font-bold text-[#f2f2f2]">
      Fields<ChevronRight size={18} color="#bbb" strokeWidth={1.3} />
    </div>
    <div className="ml-[10px] mt-[7px] flex h-[30px] w-[160px] items-center border border-black bg-[#1f1f1f] pl-[11px] pt-[1px] text-[12.5px] text-[#999]">
      <Search className="-scale-x-100" size={15} color="#aaa" strokeWidth={1.3} /><span className="ml-[9px]">Search</span>
    </div>
    <div className="flex h-[38px] shrink-0 items-center pl-[18px] pt-[6px] text-[11.5px] text-[#eee]">
      <span className="h-0 w-0 border-b-[6px] border-l-[6px] border-b-[#777] border-l-transparent" />
      <svg className="ml-[9px]" width="13" height="11" viewBox="0 0 13 11"><path d="M0 0h13v11H0z" fill="#bbb" /><path d="M0 3.5h13M0 7h13M4.3 0v11M8.6 0v11" stroke="#404040" /></svg>
      <span className="ml-[12px]">Lead_Scored_Da...</span>
    </div>
    <div className="ml-[5px] flex w-[168px] flex-col gap-[2px]">
      {FIELDS.map(([name, kind], i) => (
        <div key={i} className="flex h-[20px] items-center rounded-[3px] bg-[#636363] text-[11.5px] text-[#f0f0f0]">
          <span className="ml-[5px] h-[4px] w-[12px] border-y border-[#333]" />
          <span className="ml-[5px] h-[12px] w-[12px] border border-[#bbb] bg-[#f4f4f4]" />
          <span className="ml-[6px] flex w-[13px] justify-center"><FieldIcon kind={kind} /></span>
          <span className="ml-[6px] whitespace-nowrap pt-px">{name}</span>
        </div>
      ))}
    </div>
  </div>
);

/* ---------- taskbar ---------- */
const TaskIcon = ({ children, active }: { children: ReactNode; active?: boolean }) => (
  <div className="relative flex h-full w-[49px] items-center justify-center">
    {children}
    {active && <span className="absolute bottom-0 left-[4px] right-[4px] h-[2px] bg-[#76b9ed]" />}
  </div>
);

const Taskbar = () => (
  <div className="flex h-[40px] items-center bg-[#050505] text-white">
    <div className="flex w-[48px] justify-center">
      <svg width="17" height="17" viewBox="0 0 17 17" fill="#fff"><path d="M0 2.5l7-1v6.5H0zM8 1.3L17 0v8H8zM0 9h7v6.5l-7-1zM8 9h9v8l-9-1.3z" /></svg>
    </div>
    <div className="flex h-full w-[344px] items-center bg-[#2c2c2c] pl-[11px] text-[14px] text-[#8f8f8f]">
      <span className="h-[20px] w-[20px] rounded-full border-[3px] border-[#d8d8d8]" />
      <span className="ml-[9px]">I&apos;m Cortana. Ask me anything.</span>
    </div>
    <div className="flex h-full items-center">
      <div className="flex w-[48px] justify-center">
        <svg width="18" height="14" viewBox="0 0 18 14" fill="none" stroke="#fff"><rect x="4.5" y="0.5" width="9" height="13" strokeWidth="1.2" /><path d="M2 2.5H.5v9H2M16 2.5h1.5v9H16" /></svg>
      </div>
      <TaskIcon active>
        <svg width="24" height="24" viewBox="0 0 24 24"><path d="M12 12L3.5 5A11 11 0 0 1 22.5 8.5H12z" fill="#db4437" /><path d="M3.5 5A11 11 0 0 0 9 23l4-10z" fill="#0f9d58" /><path d="M22.5 8.5A11 11 0 0 1 9 23l4-10z" fill="#f4b400" /><circle cx="12" cy="12" r="5.5" fill="#fff" /><circle cx="12" cy="12" r="4.2" fill="#4285f4" /></svg>
      </TaskIcon>
      <TaskIcon active>
        <svg width="22" height="20" viewBox="0 0 22 20"><path d="M1 0h8l2 3h10v17H1z" fill="#f5d76e" /><path d="M1 3h20v2H1z" fill="#e0b840" /><path d="M7 20v-7h8v7h-3v-4h-2v4z" fill="#1e88d8" /></svg>
      </TaskIcon>
      <TaskIcon>
        <svg width="24" height="26" viewBox="0 0 24 26"><circle cx="9" cy="7" r="7" fill="#ddd" stroke="#a33" /><path d="M9 3v4" stroke="#a33" strokeWidth="1.5" /><path d="M7 8l10 12M13 8L9 18" stroke="#bbb" strokeWidth="2" /><circle cx="19" cy="22" r="3" fill="none" stroke="#2a8fd8" strokeWidth="1.8" /><circle cx="8" cy="21" r="3" fill="none" stroke="#2a8fd8" strokeWidth="1.8" /></svg>
      </TaskIcon>
      <TaskIcon active>
        <svg width="24" height="22" viewBox="0 0 24 22"><path d="M1 5l10-4 4 13-9 3z" fill="#8cc07a" /><path d="M8 6l13-3 2 14-12 3z" fill="#f5e28c" /></svg>
      </TaskIcon>
      <div className="relative flex h-full w-[48px] items-center justify-center bg-[#2b2e33]">
        <PbiLogo size={22} />
        <span className="absolute bottom-0 left-0 h-[2px] w-full bg-[#76b9ed]" />
      </div>
    </div>
    <div className="ml-auto flex h-full items-center">
      <ChevronUp size={17} color="#eee" strokeWidth={1.3} />
      <svg className="ml-[9px]" width="16" height="9" viewBox="0 0 16 9"><rect x="0.5" y="0.5" width="13" height="8" fill="none" stroke="#fff" /><rect x="2" y="2" width="8" height="5" fill="#fff" /><rect x="14" y="3" width="1.5" height="3" fill="#fff" /></svg>
      <Wifi className="ml-[9px] -rotate-45" size={14} color="#ddd" strokeWidth={1.5} />
      <Volume2 className="ml-[7px]" size={17} color="#eee" strokeWidth={1.2} />
      <svg className="ml-[7px]" width="16" height="16" viewBox="0 0 16 16"><path d="M0 0h16v10H9v3H0z" fill="#f2f2f2" /><path d="M2 3h11M2 6h11M2 9h6" stroke="#222" /><circle cx="11" cy="12" r="3.5" fill="#111" stroke="#fff" /><path d="M9 12h4" stroke="#fff" /></svg>
      <div className="ml-[8px] w-[64px] text-center text-[12px] leading-[18px] text-[#e8e8e8]">
        <div>1:45 PM</div>
        <div>6/6/2016</div>
      </div>
      <div className="ml-[3px] h-full w-px bg-[#555]" />
      <div className="w-[4px]" />
    </div>
  </div>
);

const App = () => (
  <div className="flex h-[900px] w-[1600px] flex-col overflow-hidden font-['Open_Sans',sans-serif]">
    <TitleBar />
    <TabRow />
    <Ribbon />
    <div className="flex h-[699px]">
      <LeftRail />
      <div className="flex w-[1197px] shrink-0 flex-col bg-[#eaeaea]">
        <ReportPage />
        <PageTabs />
      </div>
      <VizPanel />
      <FieldsPanel />
    </div>
    <div className="flex h-[22px] items-center justify-between bg-[#333] pl-[5px] pr-[5px] font-['Liberation_Sans',sans-serif] text-[10.8px] text-white">
      <span className="text-[11.5px]">PAGE 2 OF 2</span>
      <span className="font-semibold">UPDATE AVAILABLE (CLICK TO DOWNLOAD)</span>
    </div>
    <Taskbar />
  </div>
);

export default App;
